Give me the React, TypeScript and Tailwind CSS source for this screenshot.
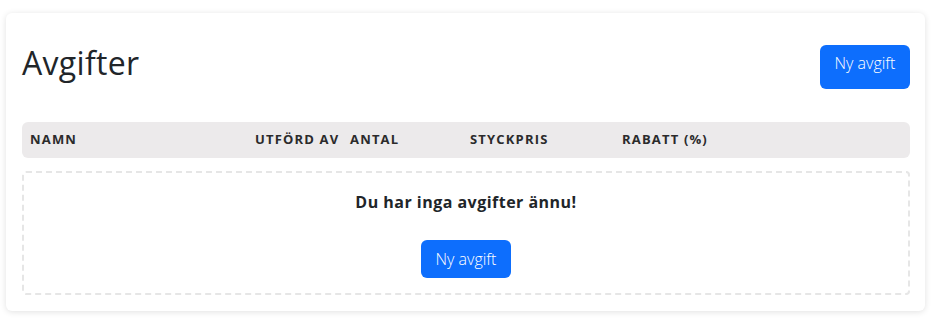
export default function App() {
  const font = { fontFamily: '"Open Sans", "Noto Sans", sans-serif' };

  return (
    <div className="min-h-screen bg-white px-[6px] pt-[13px]" style={font}>
      <div className="w-[919px] rounded-md bg-white pb-4 pl-4 pr-[15px] pt-8 text-[#212529] shadow-[0_1px_6px_rgba(0,0,0,0.12)]">
        <div className="flex items-start justify-between">
          <h1 className="mt-0 text-[32px] font-normal leading-[36px] tracking-[0.01em]">Avgifter</h1>
          <button className="flex h-[44px] w-[90px] items-start justify-center rounded-md bg-[#0d6efd] pt-[6px] text-[16px] font-light leading-6 text-white">
            Ny avgift
          </button>
        </div>

        <div className="mt-[33px] grid h-9 grid-cols-[225px_95px_120px_152px_1fr] items-center whitespace-nowrap rounded-md bg-[#eceaeb] text-[13px] font-bold uppercase tracking-[0.09em] text-[#2b2b2b]">
          <div className="px-2">Namn</div>
          <div className="px-2">Utförd av</div>
          <div className="px-2">Antal</div>
          <div className="px-2">Styckpris</div>
          <div className="px-2">Rabatt (%)</div>
        </div>

        <div className="mt-[13px] flex h-[124px] flex-col items-center rounded-sm border-2 border-dashed border-[#e6e6e6] pt-[17px]">
          <p className="text-[16px] font-bold leading-6 tracking-[0.03em]">Du har inga avgifter ännu!</p>
          <button className="mt-[26px] h-[38px] w-[90px] rounded-md bg-[#0d6efd] text-[16px] font-light text-white">
            Ny avgift
          </button>
        </div>
      </div>
    </div>
  );
}
